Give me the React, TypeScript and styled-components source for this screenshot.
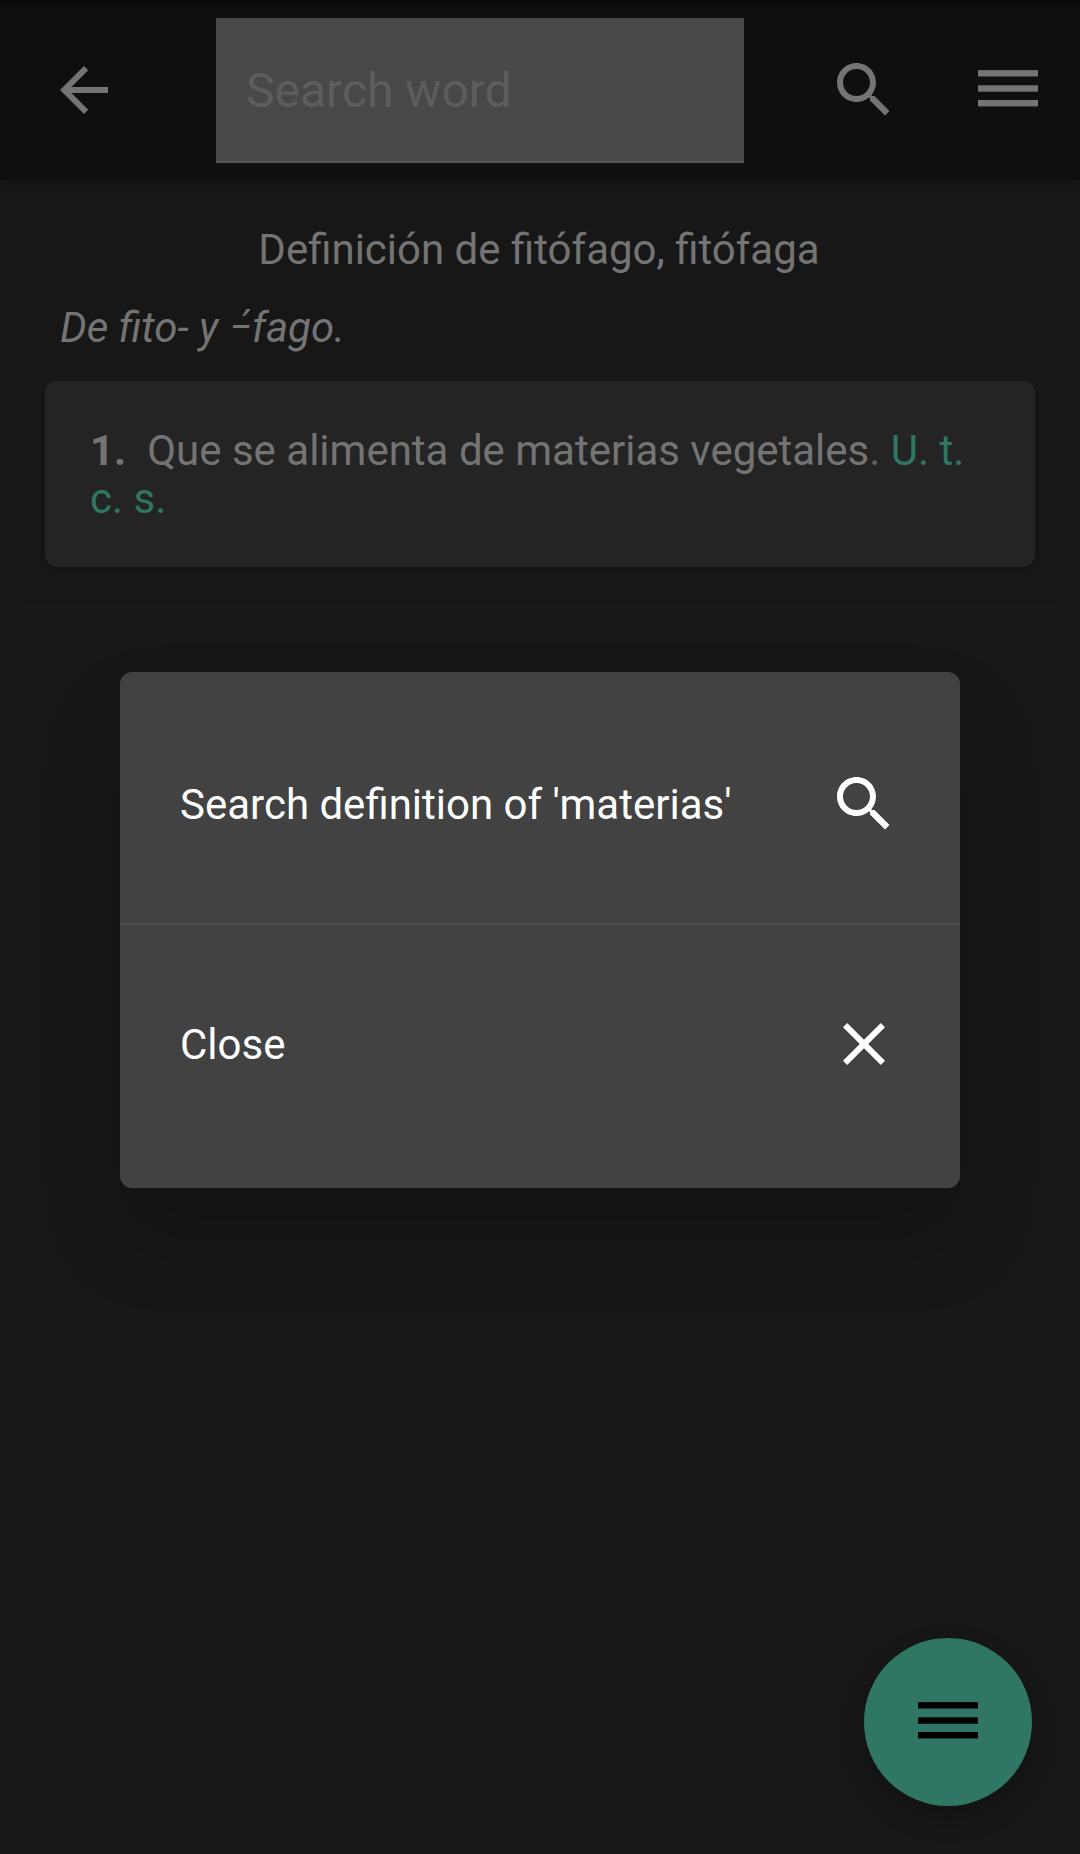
import React from "react";
import styled, { createGlobalStyle } from "styled-components";

const GlobalStyle = createGlobalStyle`
  * { box-sizing: border-box; }
  body {
    margin: 0;
    background: #171717;
    font-family: Roboto, "Noto Sans", sans-serif;
    font-size: 42px;
  }
`;

const Screen = styled.div`
  display: flex;
  flex-direction: column;
  width: 1080px;
  height: 1854px;
  overflow: hidden;
  background: #171717;
  color: #747474;
`;

const Header = styled.header`
  display: flex;
  align-items: flex-start;
  height: 180px;
  flex: none;
  padding: 12px 30px 0 48px;
  border-top: 6px solid #0a0a0a;
  background: #0f0f0f;
  box-shadow: 0 3px 8px rgba(0, 0, 0, 0.15);
`;

const IconButton = styled.button<{ $ml?: number; $mt?: number }>`
  display: flex;
  flex: none;
  padding: 0;
  border: 0;
  margin-left: ${(p) => p.$ml ?? 0}px;
  margin-top: ${(p) => p.$mt ?? 36}px;
  background: none;
  color: inherit;
`;

const SearchInput = styled.input`
  width: 528px;
  height: 145px;
  margin: 0 0 0 96px;
  padding: 2px 30px 0;
  border: 0;
  border-bottom: 2px solid #555555;
  border-radius: 0;
  outline: 0;
  background: #484848;
  box-shadow: inset 0 -1px 0 #4c4c4c;
  color: #747474;
  font: 400 48px Roboto, sans-serif;
  &::placeholder { color: #5d5d5d; opacity: 1; }
`;

const Content = styled.main`
  display: flex;
  flex-direction: column;
`;

const Title = styled.h1`
  margin: 45px 0 0;
  padding-right: 2px;
  font-size: 42px;
  font-weight: 400;
  line-height: 49px;
  text-align: center;
`;

const Etymology = styled.p`
  margin: 29px 60px 0;
  font-style: italic;
  line-height: 49px;
`;

const RaisedDash = styled.span`
  display: inline-block;
  transform: scaleX(0.86);
`;

const Card = styled.article`
  height: 186px;
  margin: 29px 45px 0;
  padding: 46px 45px;
  border-radius: 12px;
  background: #242424;
  box-shadow: 0 3px 5px rgba(0, 0, 0, 0.2);
  line-height: 48px;
`;

const Index = styled.b`
  margin-right: 10.5px;
`;

const Stop = styled.span`
  color: #606060;
`;

const Usage = styled.span`
  color: #2f7664;
`;

const Divider = styled.hr`
  width: 1022px;
  height: 2px;
  margin: 38px auto 0;
  border: 0;
  background: #1c1c1c;
`;

const Overlay = styled.div`
  position: absolute;
  inset: 0;
  width: 1080px;
  height: 1854px;
  padding: 672px 120px 0;
  overflow: hidden;
`;

const Dialog = styled.div`
  height: 516px;
  padding: 12px 0 24px;
  border-radius: 12px;
  background: #424242;
  color: #ffffff;
  box-shadow: 0 48px 80px rgba(0, 0, 0, 0.2);
`;

const DialogRow = styled.div<{ $divided?: boolean }>`
  display: flex;
  align-items: center;
  justify-content: space-between;
  height: 240px;
  padding: 0 60px;
  box-shadow: ${(p) =>
    p.$divided ? "inset 0 -1px 0 #4e4e4e, 0 1px 0 #4e4e4e" : "none"};
  line-height: 49px;
`;

const Fab = styled.button`
  position: absolute;
  left: 864px;
  top: 1638px;
  display: flex;
  align-items: center;
  justify-content: center;
  width: 168px;
  height: 168px;
  padding: 0 0 3px;
  border: 0;
  border-radius: 50%;
  background: #2f7664;
  color: #000000;
  box-shadow: 0 12px 26px rgba(0, 0, 0, 0.22);
`;

const paths = {
  back: "M20 11H7.83l5.59-5.59L12 4l-8 8 8 8 1.41-1.41L7.83 13H20v-2z",
  search:
    "M15.5 14h-.79l-.28-.27C15.41 12.59 16 11.11 16 9.5 16 5.91 13.09 3 9.5 3S3 5.91 3 9.5 5.91 16 9.5 16c1.61 0 3.09-.59 4.23-1.57l.27.28v.79l5 4.99L20.49 19l-4.99-5zm-6 0C7.01 14 5 11.99 5 9.5S7.01 5 9.5 5 14 7.01 14 9.5 11.99 14 9.5 14z",
  close:
    "M19 6.41L17.59 5 12 10.59 6.41 5 5 6.41 10.59 12 5 17.59 6.41 19 12 13.41 17.59 19 19 17.59 13.41 12z",
};

function Icon({ name }: { name: keyof typeof paths }) {
  return (
    <svg width="72" height="72" viewBox="0 0 24 24" fill="currentColor">
      <path d={paths[name]} />
    </svg>
  );
}

function MenuIcon() {
  return (
    <svg width="60" height="37" viewBox="0 0 60 37" fill="currentColor">
      <rect y="0.1" width="60" height="6.4" />
      <rect y="15.3" width="60" height="6.4" />
      <rect y="30" width="60" height="6.4" />
    </svg>
  );
}

export default function App() {
  return (
    <>
      <GlobalStyle />
      <Screen>
        <Header>
          <IconButton aria-label="Back"><Icon name="back" /></IconButton>
          <SearchInput placeholder="Search word" />
          <IconButton $ml={84} aria-label="Search"><Icon name="search" /></IconButton>
          <IconButton $ml={78} $mt={52} aria-label="Menu"><MenuIcon /></IconButton>
        </Header>
        <Content>
          <Title>Definición de fitófago, fitófaga</Title>
          <Etymology>
            De fito- y <RaisedDash>‒́</RaisedDash>fago.
          </Etymology>
          <Card>
            <Index>1.</Index> Que se alimenta de materias vegetales<Stop>.</Stop>{" "}
            <Usage>U. t. c. s.</Usage>
          </Card>
          <Divider />
        </Content>
      </Screen>
      <Fab aria-label="Actions"><MenuIcon /></Fab>
      <Overlay>
        <Dialog role="dialog">
          <DialogRow $divided>
            <span>Search definition of 'materias'</span>
            <Icon name="search" />
          </DialogRow>
          <DialogRow>
            <span>Close</span>
            <Icon name="close" />
          </DialogRow>
        </Dialog>
      </Overlay>
    </>
  );
}
